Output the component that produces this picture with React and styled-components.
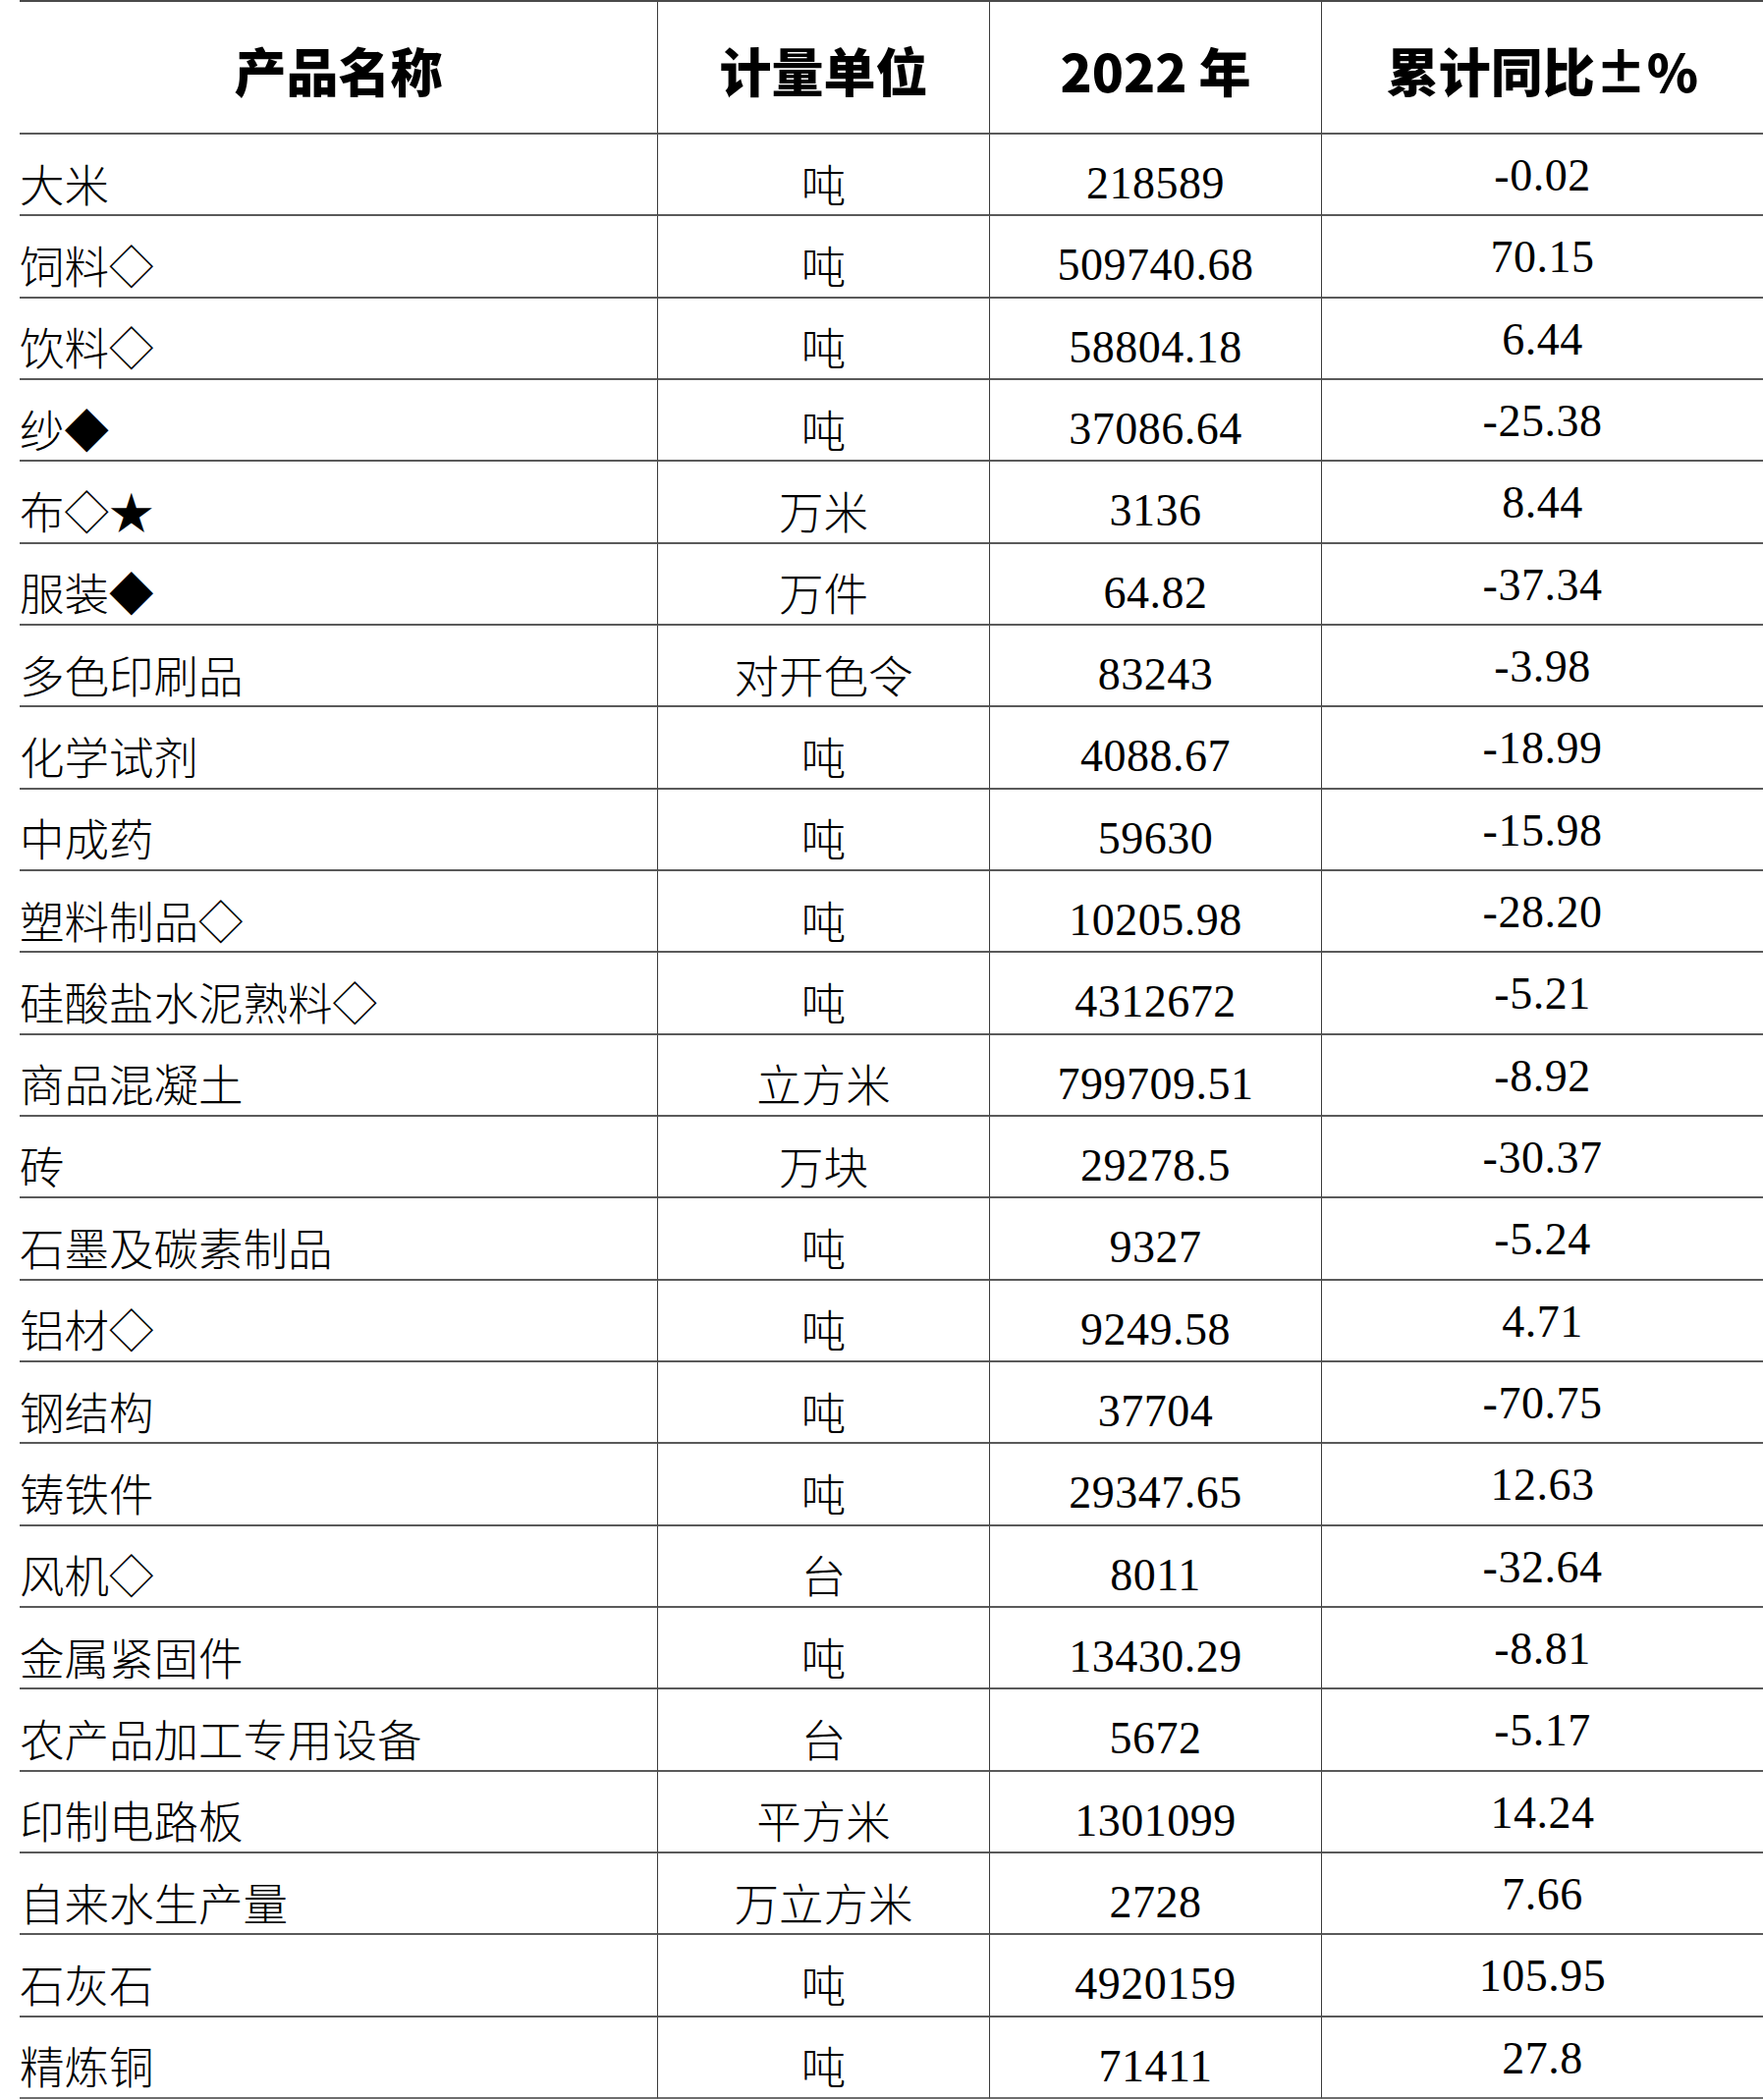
import styled, { createGlobalStyle } from "styled-components";

const GlobalStyle = createGlobalStyle`
  html, body {
    margin: 0;
    padding: 0;
    background: #ffffff;
  }
`;

const Sheet = styled.div`
  margin-left: 20px;
  width: 1775px;
  display: grid;
  grid-template-columns: 649px 338px 338px 1fr;
  grid-template-rows: 135px;
  grid-auto-rows: 83.33px;
  border-top: 2px solid #4a4a4a;
  box-sizing: border-box;
`;

const HeadCell = styled.div`
  display: flex;
  align-items: center;
  justify-content: center;
  padding-top: 4px;
  box-sizing: border-box;
  border-bottom: 2px solid #5a5a5a;
  border-left: ${(p) => (p.$first ? "none" : "1.5px solid #3c3c3c")};
  font-family: "Noto Sans CJK SC", sans-serif;
  font-weight: 900;
  font-size: 53px;
  letter-spacing: 0px;
  color: #000;
`;

const Cell = styled.div`
  display: flex;
  align-items: center;
  justify-content: ${(p) => (p.$left ? "flex-start" : "center")};
  padding-top: ${(p) => p.$shift || 0}px;
  box-sizing: border-box;
  border-bottom: 2px solid ${(p) => (p.$last ? "#6e6e6e" : "#5a5a5a")};
  border-left: ${(p) => (p.$first ? "none" : "1.5px solid #3c3c3c")};
  font-family: "Liberation Serif", "Noto Sans CJK SC", serif;
  font-weight: 300;
  font-size: 45.5px;
  color: #000;
  white-space: nowrap;
`;

const Num = styled.span`
  font-family: "Liberation Serif", serif;
  font-weight: 400;
  font-size: 46px;
  letter-spacing: 0.5px;
`;

const rows = [
  ["大米", "吨", "218589", "-0.02"],
  ["饲料◇", "吨", "509740.68", "70.15"],
  ["饮料◇", "吨", "58804.18", "6.44"],
  ["纱◆", "吨", "37086.64", "-25.38"],
  ["布◇★", "万米", "3136", "8.44"],
  ["服装◆", "万件", "64.82", "-37.34"],
  ["多色印刷品", "对开色令", "83243", "-3.98"],
  ["化学试剂", "吨", "4088.67", "-18.99"],
  ["中成药", "吨", "59630", "-15.98"],
  ["塑料制品◇", "吨", "10205.98", "-28.20"],
  ["硅酸盐水泥熟料◇", "吨", "4312672", "-5.21"],
  ["商品混凝土", "立方米", "799709.51", "-8.92"],
  ["砖", "万块", "29278.5", "-30.37"],
  ["石墨及碳素制品", "吨", "9327", "-5.24"],
  ["铝材◇", "吨", "9249.58", "4.71"],
  ["钢结构", "吨", "37704", "-70.75"],
  ["铸铁件", "吨", "29347.65", "12.63"],
  ["风机◇", "台", "8011", "-32.64"],
  ["金属紧固件", "吨", "13430.29", "-8.81"],
  ["农产品加工专用设备", "台", "5672", "-5.17"],
  ["印制电路板", "平方米", "1301099", "14.24"],
  ["自来水生产量", "万立方米", "2728", "7.66"],
  ["石灰石", "吨", "4920159", "105.95"],
  ["精炼铜", "吨", "71411", "27.8"],
];

export default function App() {
  return (
    <>
      <GlobalStyle />
      <Sheet>
        <HeadCell $first>产品名称</HeadCell>
        <HeadCell>计量单位</HeadCell>
        <HeadCell>2022 年</HeadCell>
        <HeadCell>累计同比±%</HeadCell>
        {rows.map((r, i) => {
          const last = i === rows.length - 1;
          return [
            <Cell key={i + "a"} $first $left $shift={16} $last={last}>
              {r[0]}
            </Cell>,
            <Cell key={i + "b"} $shift={16} $last={last}>
              {r[1]}
            </Cell>,
            <Cell key={i + "c"} $shift={18} $last={last}>
              <Num>{r[2]}</Num>
            </Cell>,
            <Cell key={i + "d"} $shift={2} $last={last}>
              <Num>{r[3]}</Num>
            </Cell>,
          ];
        })}
      </Sheet>
    </>
  );
}
